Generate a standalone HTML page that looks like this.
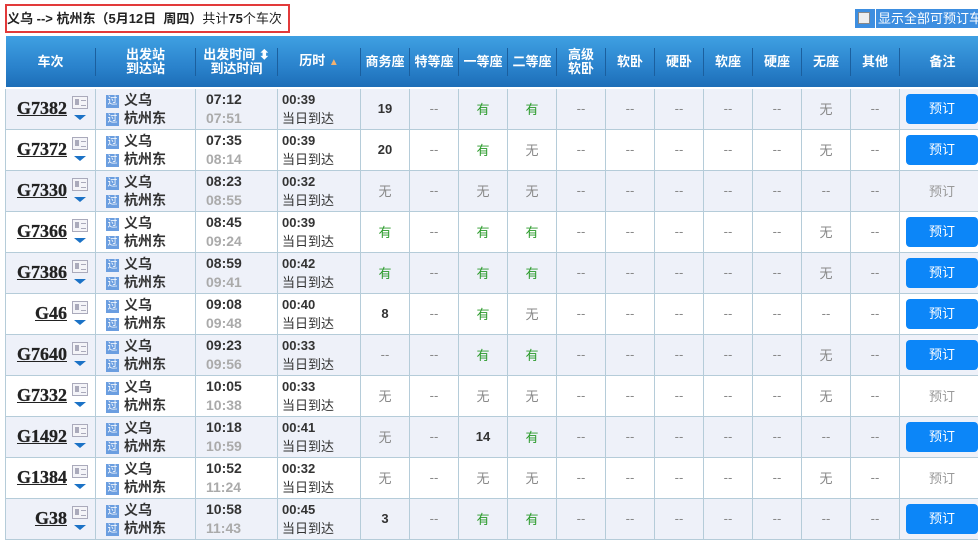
<!DOCTYPE html>
<html><head><meta charset="utf-8"><style>
*{margin:0;padding:0;box-sizing:border-box}
body{width:978px;height:539px;overflow:hidden;background:#fff;font-family:"Liberation Sans","Noto Sans CJK SC",sans-serif;position:relative}
.title{position:absolute;left:5px;top:4px;width:285px;height:29px;border:2px solid #e23a3a;font-size:13px;line-height:25px;color:#222;white-space:nowrap;overflow:hidden;padding-left:0}
.title b{font-weight:bold}
.chk{position:absolute;left:855px;top:9px;width:130px;height:19px;background:#3d8ee0;color:#fff;font-size:13px;line-height:19px;white-space:nowrap}
.chk i{position:absolute;left:3px;top:3px;width:12px;height:12px;background:#eee;border:1px solid #888}
.chk span{position:absolute;left:20px;top:0;border-left:1px solid #fff;padding-left:2px}
table{position:absolute;left:5px;top:36px;border-collapse:collapse;table-layout:fixed;width:1005px}
thead tr{height:52px;background:linear-gradient(#3fa0e2,#2a82cc 60%,#1c6db6)}
th{color:#fff;font-size:13px;font-weight:bold;line-height:14px;position:relative;border-bottom:2px solid #fff}
th:after{content:"";position:absolute;right:0;top:12px;height:28px;border-right:1px solid #1b5f9e}
th:last-child:after{display:none}
td{border:1px solid #b5ccd9;height:41px;text-align:center;font-size:13px;color:#888;position:relative}
tbody tr:nth-child(odd){background:#eef1f9}
tbody tr:nth-child(even){background:#fff}
.tn{text-align:right;padding-right:28px;font-size:18px;font-weight:bold;color:#222;text-decoration:underline;font-family:"Liberation Serif",serif;-webkit-text-stroke:0.3px #222}
.card{position:absolute;left:66px;top:7px;width:16px;height:13px;border:1px solid #aab;background:#f4f4f8}
.card:before{content:"";position:absolute;left:2px;top:2px;width:4px;height:6px;background:#aab}
.card:after{content:"";position:absolute;left:8px;top:3px;width:5px;height:4px;border-top:1px solid #aab;border-bottom:1px solid #aab}
.tri{position:absolute;left:68px;top:26px;border-left:6px solid transparent;border-right:6px solid transparent;border-top:5px solid #1b72c6}
.st{text-align:left;padding-left:10px;font-size:14px;font-weight:bold;color:#333;line-height:18px}
.g{display:inline-block;width:13px;height:13px;background:#6b9ee0;color:#fff;font-size:10px;line-height:13px;text-align:center;margin-right:5px;vertical-align:1px;font-weight:normal}
.tm{text-align:left;padding-left:10px;font-size:14px;font-weight:bold;color:#333;line-height:19px}
.tm span{color:#aaa}
.du{text-align:left;padding-left:4px;font-size:13px;color:#333;line-height:19px}
.du b{font-weight:bold}
.y{color:#2a9a2a}
.n{color:#333;font-weight:bold}
.btn{display:block;margin-left:6px;width:72px;height:30px;background:#0c86f8;border-radius:4px;color:#fff;line-height:30px;font-size:13px}
.bt{color:#999;margin-left:6px;display:block;width:72px}
</style></head><body>
<div class="title"><b>义乌 --&gt; 杭州东（5月12日&nbsp; 周四）</b>共计<b>75</b>个车次</div>
<div class="chk"><i></i><span>显示全部可预订车次</span></div>
<table>
<colgroup><col style="width:90px"><col style="width:100px"><col style="width:82px"><col style="width:83px"><col style="width:49px"><col style="width:49px"><col style="width:49px"><col style="width:49px"><col style="width:49px"><col style="width:49px"><col style="width:49px"><col style="width:49px"><col style="width:49px"><col style="width:49px"><col style="width:49px"><col style="width:111px"></colgroup>
<thead><tr><th>车次</th><th>出发站<br>到达站</th><th>出发时间 ⬍<br>到达时间</th><th>历时 <span style="color:#f0b070;font-size:10px">▲</span></th><th>商务座</th><th>特等座</th><th>一等座</th><th>二等座</th><th>高级<br>软卧</th><th>软卧</th><th>硬卧</th><th>软座</th><th>硬座</th><th>无座</th><th>其他</th><th style="text-align:left;padding-left:30px">备注</th></tr></thead>
<tbody>
<tr><td class="tn">G7382<i class="card"></i><i class="tri"></i></td><td class="st"><span class="g">过</span>义乌<br><span class="g">过</span>杭州东</td><td class="tm">07:12<br><span>07:51</span></td><td class="du"><b>00:39</b><br>当日到达</td><td class="n">19</td><td>--</td><td class="y">有</td><td class="y">有</td><td>--</td><td>--</td><td>--</td><td>--</td><td>--</td><td>无</td><td>--</td><td><span class="btn">预订</span></td></tr>
<tr><td class="tn">G7372<i class="card"></i><i class="tri"></i></td><td class="st"><span class="g">过</span>义乌<br><span class="g">过</span>杭州东</td><td class="tm">07:35<br><span>08:14</span></td><td class="du"><b>00:39</b><br>当日到达</td><td class="n">20</td><td>--</td><td class="y">有</td><td>无</td><td>--</td><td>--</td><td>--</td><td>--</td><td>--</td><td>无</td><td>--</td><td><span class="btn">预订</span></td></tr>
<tr><td class="tn">G7330<i class="card"></i><i class="tri"></i></td><td class="st"><span class="g">过</span>义乌<br><span class="g">过</span>杭州东</td><td class="tm">08:23<br><span>08:55</span></td><td class="du"><b>00:32</b><br>当日到达</td><td>无</td><td>--</td><td>无</td><td>无</td><td>--</td><td>--</td><td>--</td><td>--</td><td>--</td><td>--</td><td>--</td><td><span class="bt">预订</span></td></tr>
<tr><td class="tn">G7366<i class="card"></i><i class="tri"></i></td><td class="st"><span class="g">过</span>义乌<br><span class="g">过</span>杭州东</td><td class="tm">08:45<br><span>09:24</span></td><td class="du"><b>00:39</b><br>当日到达</td><td class="y">有</td><td>--</td><td class="y">有</td><td class="y">有</td><td>--</td><td>--</td><td>--</td><td>--</td><td>--</td><td>无</td><td>--</td><td><span class="btn">预订</span></td></tr>
<tr><td class="tn">G7386<i class="card"></i><i class="tri"></i></td><td class="st"><span class="g">过</span>义乌<br><span class="g">过</span>杭州东</td><td class="tm">08:59<br><span>09:41</span></td><td class="du"><b>00:42</b><br>当日到达</td><td class="y">有</td><td>--</td><td class="y">有</td><td class="y">有</td><td>--</td><td>--</td><td>--</td><td>--</td><td>--</td><td>无</td><td>--</td><td><span class="btn">预订</span></td></tr>
<tr><td class="tn">G46<i class="card"></i><i class="tri"></i></td><td class="st"><span class="g">过</span>义乌<br><span class="g">过</span>杭州东</td><td class="tm">09:08<br><span>09:48</span></td><td class="du"><b>00:40</b><br>当日到达</td><td class="n">8</td><td>--</td><td class="y">有</td><td>无</td><td>--</td><td>--</td><td>--</td><td>--</td><td>--</td><td>--</td><td>--</td><td><span class="btn">预订</span></td></tr>
<tr><td class="tn">G7640<i class="card"></i><i class="tri"></i></td><td class="st"><span class="g">过</span>义乌<br><span class="g">过</span>杭州东</td><td class="tm">09:23<br><span>09:56</span></td><td class="du"><b>00:33</b><br>当日到达</td><td>--</td><td>--</td><td class="y">有</td><td class="y">有</td><td>--</td><td>--</td><td>--</td><td>--</td><td>--</td><td>无</td><td>--</td><td><span class="btn">预订</span></td></tr>
<tr><td class="tn">G7332<i class="card"></i><i class="tri"></i></td><td class="st"><span class="g">过</span>义乌<br><span class="g">过</span>杭州东</td><td class="tm">10:05<br><span>10:38</span></td><td class="du"><b>00:33</b><br>当日到达</td><td>无</td><td>--</td><td>无</td><td>无</td><td>--</td><td>--</td><td>--</td><td>--</td><td>--</td><td>无</td><td>--</td><td><span class="bt">预订</span></td></tr>
<tr><td class="tn">G1492<i class="card"></i><i class="tri"></i></td><td class="st"><span class="g">过</span>义乌<br><span class="g">过</span>杭州东</td><td class="tm">10:18<br><span>10:59</span></td><td class="du"><b>00:41</b><br>当日到达</td><td>无</td><td>--</td><td class="n">14</td><td class="y">有</td><td>--</td><td>--</td><td>--</td><td>--</td><td>--</td><td>--</td><td>--</td><td><span class="btn">预订</span></td></tr>
<tr><td class="tn">G1384<i class="card"></i><i class="tri"></i></td><td class="st"><span class="g">过</span>义乌<br><span class="g">过</span>杭州东</td><td class="tm">10:52<br><span>11:24</span></td><td class="du"><b>00:32</b><br>当日到达</td><td>无</td><td>--</td><td>无</td><td>无</td><td>--</td><td>--</td><td>--</td><td>--</td><td>--</td><td>无</td><td>--</td><td><span class="bt">预订</span></td></tr>
<tr><td class="tn">G38<i class="card"></i><i class="tri"></i></td><td class="st"><span class="g">过</span>义乌<br><span class="g">过</span>杭州东</td><td class="tm">10:58<br><span>11:43</span></td><td class="du"><b>00:45</b><br>当日到达</td><td class="n">3</td><td>--</td><td class="y">有</td><td class="y">有</td><td>--</td><td>--</td><td>--</td><td>--</td><td>--</td><td>--</td><td>--</td><td><span class="btn">预订</span></td></tr>
</tbody></table>
</body></html>
